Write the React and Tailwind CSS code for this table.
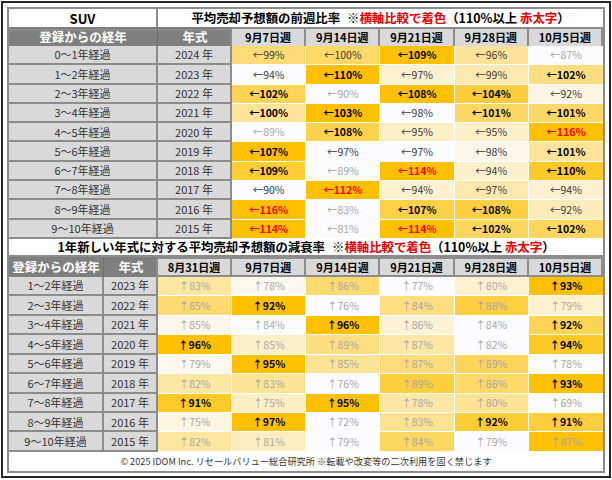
const jp = { fontFamily: '"Noto Sans CJK JP", "Noto Sans", sans-serif' };

const topWeeks = ['9月7日週', '9月14日週', '9月21日週', '9月28日週', '10月5日週'];
const bottomWeeks = ['8月31日週', '9月7日週', '9月14日週', '9月21日週', '9月28日週', '10月5日週'];

// m = dark normal, l = light grey, b = bold black, r = bold red
const topRows = [
  ['0〜1年経過', '2024 年', [[99, 'm'], [100, 'm'], [109, 'b'], [96, 'm'], [87, 'l']]],
  ['1〜2年経過', '2023 年', [[94, 'm'], [110, 'b'], [97, 'm'], [99, 'm'], [102, 'b']]],
  ['2〜3年経過', '2022 年', [[102, 'b'], [90, 'l'], [108, 'b'], [104, 'b'], [92, 'm']]],
  ['3〜4年経過', '2021 年', [[100, 'b'], [103, 'b'], [98, 'm'], [101, 'b'], [101, 'b']]],
  ['4〜5年経過', '2020 年', [[89, 'l'], [108, 'b'], [95, 'm'], [95, 'm'], [116, 'r']]],
  ['5〜6年経過', '2019 年', [[107, 'b'], [97, 'm'], [97, 'm'], [98, 'm'], [101, 'b']]],
  ['6〜7年経過', '2018 年', [[109, 'b'], [89, 'l'], [114, 'r'], [94, 'm'], [110, 'b']]],
  ['7〜8年経過', '2017 年', [[90, 'm'], [112, 'r'], [94, 'm'], [97, 'm'], [94, 'm']]],
  ['8〜9年経過', '2016 年', [[116, 'r'], [83, 'l'], [107, 'b'], [108, 'b'], [92, 'm']]],
  ['9〜10年経過', '2015 年', [[114, 'r'], [81, 'l'], [114, 'r'], [102, 'b'], [102, 'b']]],
];

const bottomRows = [
  ['1〜2年経過', '2023 年', [83, 78, 86, 77, 80, 93]],
  ['2〜3年経過', '2022 年', [85, 92, 76, 84, 88, 79]],
  ['3〜4年経過', '2021 年', [85, 84, 96, 86, 84, 92]],
  ['4〜5年経過', '2020 年', [96, 85, 89, 87, 82, 94]],
  ['5〜6年経過', '2019 年', [79, 95, 85, 87, 89, 78]],
  ['6〜7年経過', '2018 年', [82, 83, 76, 89, 86, 93]],
  ['7〜8年経過', '2017 年', [91, 75, 95, 78, 80, 69]],
  ['8〜9年経過', '2016 年', [75, 97, 72, 83, 92, 91]],
  ['9〜10年経過', '2015 年', [82, 81, 79, 84, 79, 87]],
];

function heat(v, values) {
  const min = Math.min(...values);
  const max = Math.max(...values);
  const t = max === min ? 0 : (v - min) / (max - min);
  const r = Math.round(252 + 3 * t);
  const g = Math.round(252 - 60 * t);
  const b = Math.round(255 - 255 * t);
  return `rgb(${r}, ${g}, ${b})`;
}

const textStyles = {
  m: 'text-[#3a3a3a]',
  l: 'text-[#a8a8a8]',
  b: 'text-black font-bold',
  r: 'text-[#ff0000] font-bold',
};

function Label({ children }) {
  return (
    <div className="flex items-center justify-center bg-[#d9d9d9] border-r-2 border-b-2 border-[#8c8c8c] text-[11px] text-[#333]">
      {children}
    </div>
  );
}

function HeadCell({ children }) {
  return (
    <div className="flex items-center justify-center bg-[#d9d9d9] border-2 border-[#8c8c8c] -ml-[2px] first:ml-0 text-[11px] font-bold text-black">
      {children}
    </div>
  );
}

function Title({ children }) {
  return (
    <span className="whitespace-nowrap text-[12.4px] font-bold text-black">
      {children}
      <span className="ml-[7px]">※</span>
      <span className="text-[#e60000]">横軸比較で着色</span>
      （110%以上 <span className="text-[#e60000]">赤太字</span>）
    </span>
  );
}

export default function App() {
  return (
    <div className="w-[612px] h-[480px] bg-white pt-px pl-px" style={jp}>
      <div className="w-[610px] h-[477px] border-2 border-[#262626] p-[4px]">
        <div className="border-2 border-[#8c8c8c] bg-white">
          {/* top table */}
          <div className="grid grid-cols-[149px_74px_repeat(5,1fr)] h-[18px]">
            <div className="flex items-center justify-center border-r-2 border-b-2 border-[#8c8c8c] text-[13px] font-bold text-black">
              SUV
            </div>
            <div className="col-span-6 flex items-center justify-center border-b-2 border-[#8c8c8c] overflow-hidden">
              <Title>平均売却予想額の前週比率</Title>
            </div>
          </div>
          <div className="grid grid-cols-[149px_74px_repeat(5,1fr)] h-[19px] bg-[#7f7f7f]">
            <div className="flex items-center justify-center border-r border-[#6f6f6f] text-[12.5px] font-bold text-white">
              登録からの経年
            </div>
            <div className="flex items-center justify-center text-[12.5px] font-bold text-white">年式</div>
            {topWeeks.map((w) => (
              <HeadCell key={w}>{w}</HeadCell>
            ))}
          </div>
          {topRows.map(([age, year, cells]) => {
            const values = cells.map((c) => c[0]);
            return (
              <div key={age} className="grid grid-cols-[149px_74px_repeat(5,1fr)] h-[19.3px]">
                <Label>{age}</Label>
                <Label>{year}</Label>
                {cells.map(([v, s], i) => (
                  <div
                    key={i}
                    className={`flex items-center justify-center border-r border-b border-white last:border-r-0 text-[10.5px] ${textStyles[s]}`}
                    style={{ backgroundColor: heat(v, values) }}
                  >
                    ←{v}%
                  </div>
                ))}
              </div>
            );
          })}

          {/* bottom table */}
          <div className="flex items-center justify-center h-[18px] border-b-2 border-[#8c8c8c]">
            <Title>1年新しい年式に対する平均売却予想額の減衰率</Title>
          </div>
          <div className="grid grid-cols-[95px_54px_repeat(6,1fr)] h-[20px] bg-[#7f7f7f]">
            <div className="flex items-center justify-center border-r border-[#6f6f6f] text-[12.5px] font-bold text-white">
              登録からの経年
            </div>
            <div className="flex items-center justify-center text-[12.5px] font-bold text-white">年式</div>
            {bottomWeeks.map((w) => (
              <HeadCell key={w}>{w}</HeadCell>
            ))}
          </div>
          {bottomRows.map(([age, year, values]) => (
            <div key={age} className="grid grid-cols-[95px_54px_repeat(6,1fr)] h-[19.44px]">
              <Label>{age}</Label>
              <Label>{year}</Label>
              {values.map((v, i) => (
                <div
                  key={i}
                  className={`flex items-center justify-center border-r border-b border-white last:border-r-0 text-[10.5px] ${
                    v >= 90 ? 'text-black font-bold' : 'text-[#a8a8a8]'
                  }`}
                  style={{ backgroundColor: heat(v, values) }}
                >
                  ↑{v}%
                </div>
              ))}
            </div>
          ))}

          <div className="flex items-center justify-center h-[19px] text-[9.2px] text-[#333] whitespace-nowrap">
            © 2025 IDOM Inc. リセールバリュー総合研究所 ※転載や改変等の二次利用を固く禁じます
          </div>
        </div>
      </div>
    </div>
  );
}
